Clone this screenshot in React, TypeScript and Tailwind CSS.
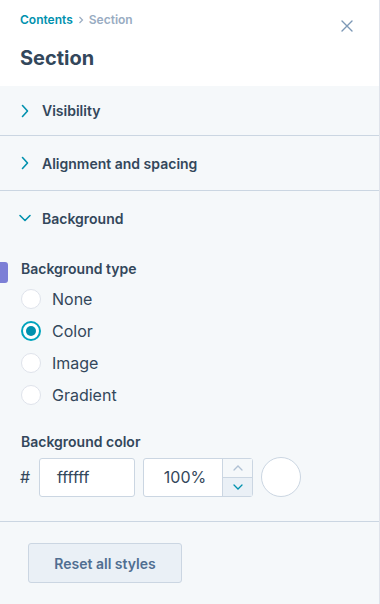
import React from "react";

function Chevron({ down }: { down?: boolean }) {
  return (
    <svg width="14" height="14" viewBox="0 0 14 14" fill="none" stroke="#0091ae" strokeWidth="1.6" strokeLinecap="round" strokeLinejoin="round">
      {down ? <path d="M2 4.5l5 5 5-5" /> : <path d="M4.5 1.5l5 5.5-5 5.5" />}
    </svg>
  );
}

function Radio({ label, checked }: { label: string; checked?: boolean }) {
  return (
    <div className="flex items-center h-[32px]">
      <div
        className={
          "w-[20px] h-[20px] rounded-full bg-white flex items-center justify-center " +
          (checked ? "border-2 border-[#00a4bd]" : "border border-[#dfe3eb]")
        }
      >
        {checked && <div className="w-[10px] h-[10px] rounded-full bg-[#0091ae]" />}
      </div>
      <span className="ml-[11px] text-[16px] text-[#33475b]">{label}</span>
    </div>
  );
}

export default function App() {
  return (
    <div
      className="w-[380px] h-[604px] bg-[#f5f8fa] border-r border-[#dfe3eb] relative overflow-hidden"
      style={{ fontFamily: "Inter, 'Noto Sans', sans-serif" }}
    >
      <div className="bg-white h-[86px] px-[20px] relative">
        <div className="pt-[11px] text-[12px] font-semibold flex items-center">
          <span className="text-[#0091ae]">Contents</span>
          <svg className="mx-[5px]" width="6" height="8" viewBox="0 0 6 8" fill="none" stroke="#99acc2" strokeWidth="1.2">
            <path d="M1.5 1l3 3-3 3" />
          </svg>
          <span className="text-[#99acc2]">Section</span>
        </div>
        <div className="absolute right-[26px] top-[20px]">
          <svg width="12" height="12" viewBox="0 0 12 12" stroke="#7c98b6" strokeWidth="1.4" strokeLinecap="round">
            <path d="M1 1l10 10M11 1L1 11" />
          </svg>
        </div>
        <div className="mt-[17px] text-[20px] font-bold text-[#33475b] leading-[24px]">Section</div>
      </div>

      <div className="h-[50px] flex items-center px-[18px] border-b border-[#cbd6e2]">
        <Chevron />
        <span className="ml-[10px] text-[14px] font-semibold text-[#33475b]">Visibility</span>
      </div>
      <div className="h-[55px] flex items-center px-[18px] border-b border-[#cbd6e2]">
        <Chevron />
        <span className="ml-[10px] text-[14px] font-semibold text-[#33475b]">Alignment and spacing</span>
      </div>
      <div className="h-[54px] flex items-center px-[18px]">
        <Chevron down />
        <span className="ml-[10px] text-[14px] font-semibold text-[#33475b]">Background</span>
      </div>

      <div className="border-b border-[#cbd6e2] pb-[24px] relative">
        <div className="absolute left-0 top-[17px] w-[8px] h-[21px] rounded-r-[3px] bg-[#7c7fd6]" />
        <div className="pl-[21px] pt-[14px] text-[14px] font-semibold text-[#33475b] leading-[20px]">Background type</div>
        <div className="pl-[21px] mt-[4px]">
          <Radio label="None" />
          <Radio label="Color" checked />
          <Radio label="Image" />
          <Radio label="Gradient" />
        </div>
        <div className="pl-[21px] mt-[21px] text-[14px] font-semibold text-[#33475b] leading-[20px]">Background color</div>
        <div className="flex items-center mt-[5px] pl-[20px]">
          <span className="text-[16px] text-[#33475b] w-[19px]">#</span>
          <div className="w-[96px] h-[39px] bg-white border border-[#cbd6e2] rounded-[3px] flex items-center pl-[17px] text-[16px] text-[#33475b]">
            ffffff
          </div>
          <div className="ml-[8px] w-[110px] h-[39px] bg-white border border-[#cbd6e2] rounded-[3px] flex">
            <div className="flex-1 flex items-center justify-center text-[16px] text-[#33475b] pl-[4px]">100%</div>
            <div className="w-[30px] border-l border-[#cbd6e2] flex flex-col bg-[#f5f8fa]">
              <div className="flex-1 flex items-center justify-center border-b border-[#cbd6e2]">
                <svg width="12" height="8" viewBox="0 0 12 8" fill="none" stroke="#b0c1d4" strokeWidth="1.3" strokeLinecap="round">
                  <path d="M2 6l4-4 4 4" />
                </svg>
              </div>
              <div className="flex-1 flex items-center justify-center bg-[#eaf0f6]">
                <svg width="12" height="8" viewBox="0 0 12 8" fill="none" stroke="#0091ae" strokeWidth="1.3" strokeLinecap="round">
                  <path d="M2 2l4 4 4-4" />
                </svg>
              </div>
            </div>
          </div>
          <div className="ml-[8px] w-[40px] h-[40px] rounded-full bg-white border border-[#cbd6e2]" />
        </div>
      </div>

      <div className="pl-[28px] pt-[21px]">
        <button className="w-[154px] h-[40px] bg-[#eaf0f6] border border-[#cbd6e2] rounded-[3px] text-[14px] font-semibold text-[#506e91]">
          Reset all styles
        </button>
      </div>
    </div>
  );
}
